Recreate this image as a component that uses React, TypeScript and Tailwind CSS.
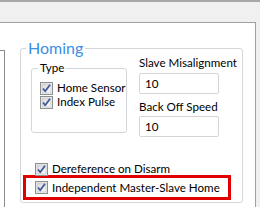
import React from "react";

function CheckBox() {
  return (
    <svg width="13" height="13" viewBox="0 0 13 13" className="shrink-0">
      <defs>
        <linearGradient id="cbFill" x1="0" y1="0" x2="1" y2="1">
          <stop offset="0" stopColor="#d8d8d8" />
          <stop offset="1" stopColor="#fbfbfb" />
        </linearGradient>
      </defs>
      <rect x="0.5" y="0.5" width="12" height="12" fill="#f4f4f4" stroke="#8e8f8f" />
      <rect x="2" y="2" width="9" height="9" fill="url(#cbFill)" stroke="#b8bcc2" strokeWidth="0.6" />
      <path d="M3 6.5 L5.2 9.3 L10 2.8" fill="none" stroke="#42599a" strokeWidth="1.8" strokeLinejoin="round" />
    </svg>
  );
}

function CheckRow({ label }: { label: string }) {
  return (
    <div className="flex items-center gap-[4px] h-[14px]">
      <CheckBox />
      <span className="leading-[14px] whitespace-nowrap">{label}</span>
    </div>
  );
}

function NumberBox({ value }: { value: string }) {
  return (
    <div className="w-[80px] h-[21px] border border-[#d5d5d5] rounded-[2px] bg-white pl-[5px] leading-[19px]">
      {value}
    </div>
  );
}

export default function App() {
  return (
    <div
      className="w-[260px] h-[207px] overflow-hidden bg-[#f0f0f0] flex flex-col text-[11.6px] text-black"
      style={{ fontFamily: 'Lato, "Noto Sans", Arial, sans-serif' }}
    >
      <div className="h-[2px] bg-[#a8a8a8]" />
      <div className="h-[20px]" />
      <div className="flex-1 w-[256px] bg-white border-t border-r border-[#a0a0a0] flex">
        {/* edge of the neighbouring group box */}
        <div className="w-[5px] mt-[27px] border-t border-r border-[#8a8a8a]" />

        {/* Homing group */}
        <div className="relative ml-[15px] mt-[25px] w-[223px] h-[155px] border border-[#d3d7db] rounded-[3px]">
          <div className="absolute left-[5px] top-[-11px] px-[2px] bg-white text-[16px] leading-[19px] text-[#3b8ee6] whitespace-nowrap">
            Homing
          </div>

          <div className="flex">
            {/* Type */}
            <div className="relative ml-[10px] mt-[19px] w-[96px] h-[65px] border border-[#d3d7db] rounded-[3px]">
              <div className="absolute left-[6px] top-[-9px] px-[2px] bg-white leading-[16px]">Type</div>
              <div className="flex flex-col pl-[8px] pt-[12px]">
                <CheckRow label="Home Sensor" />
                <CheckRow label="Index Pulse" />
              </div>
            </div>

            <div className="ml-[12px] mt-[6px] flex flex-col">
              <div className="leading-[16px] whitespace-nowrap">Slave Misalignment</div>
              <div className="mt-[2px]">
                <NumberBox value="10" />
              </div>
              <div className="leading-[16px] mt-[5px] whitespace-nowrap">Back Off Speed</div>
              <div className="mt-[1px]">
                <NumberBox value="10" />
              </div>
            </div>
          </div>

          <div className="ml-[14px] mt-[25px]">
            <CheckRow label="Dereference on Disarm" />
          </div>
          <div className="ml-[2px] mt-[-1px] w-[208px] h-[25px] border-[3px] border-[#e00000] flex items-center pl-[9px]">
            <CheckRow label="Independent Master-Slave Home" />
          </div>
        </div>
      </div>
    </div>
  );
}
